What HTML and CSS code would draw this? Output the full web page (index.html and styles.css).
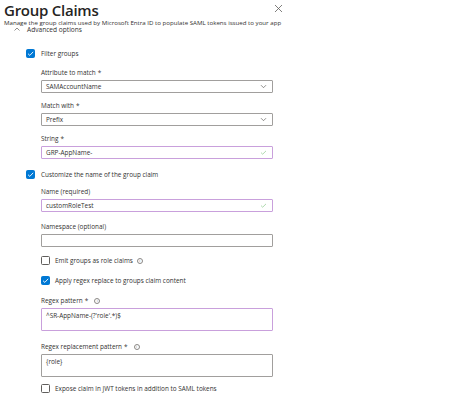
FILE: index.html
```html
<!DOCTYPE html>
<html>
<head>
<meta charset="utf-8">
<link rel="stylesheet" href="styles.css">
</head>
<body>
<div class="panel">
  <header class="head">
    <div class="title-row">
      <h1 class="title">Group Claims</h1>
      <svg class="close" width="9" height="9" viewBox="0 0 9 9"><path d="M1 1L8 8M8 1L1 8" stroke="#605e5c" stroke-width="0.8" fill="none"/></svg>
    </div>
    <p class="subtitle">Manage the group claims used by Microsoft Entra ID to populate SAML tokens issued to your app</p>
  </header>
  <div class="scroll">
    <div class="scroll-inner">
      <div class="adv">
        <svg class="adv-chev" width="6" height="4" viewBox="0 0 6 4"><path d="M0.5 3.5L3 1L5.5 3.5" stroke="#605e5c" stroke-width="0.7" fill="none"/></svg>
        <span>Advanced options</span>
      </div>

      <label class="check lvl1 c-filter">
        <span class="box on"><svg width="9" height="9" viewBox="0 0 9 9"><path d="M2 4.7L3.8 6.4L7.2 2.8" stroke="#fff" stroke-width="0.9" fill="none"/></svg></span>
        <span>Filter groups</span>
      </label>

      <div class="field f-attr">
        <div class="lbl">Attribute to match <span class="req">*</span></div>
        <div class="input"><span>SAMAccountName</span>
          <svg class="dd" width="7" height="5" viewBox="0 0 7 5"><path d="M1 1.2L3.5 3.7L6 1.2" stroke="#605e5c" stroke-width="0.7" fill="none"/></svg></div>
      </div>

      <div class="field f-match">
        <div class="lbl">Match with <span class="req">*</span></div>
        <div class="input"><span>Prefix</span>
          <svg class="dd" width="7" height="5" viewBox="0 0 7 5"><path d="M1 1.2L3.5 3.7L6 1.2" stroke="#605e5c" stroke-width="0.7" fill="none"/></svg></div>
      </div>

      <div class="field f-string">
        <div class="lbl">String <span class="req">*</span></div>
        <div class="input valid"><span>GRP-AppName-</span>
          <svg class="ok" width="7" height="5" viewBox="0 0 7 5"><path d="M1 2.6L2.7 4.2L6 0.9" stroke="#8cc98c" stroke-width="0.7" fill="none"/></svg></div>
      </div>

      <label class="check lvl1 c-custom">
        <span class="box on"><svg width="9" height="9" viewBox="0 0 9 9"><path d="M2 4.7L3.8 6.4L7.2 2.8" stroke="#fff" stroke-width="0.9" fill="none"/></svg></span>
        <span>Customize the name of the group claim</span>
      </label>

      <div class="field f-name">
        <div class="lbl">Name (required)</div>
        <div class="input valid"><span>customRoleTest</span>
          <svg class="ok" width="7" height="5" viewBox="0 0 7 5"><path d="M1 2.6L2.7 4.2L6 0.9" stroke="#8cc98c" stroke-width="0.7" fill="none"/></svg></div>
      </div>

      <div class="field f-ns">
        <div class="lbl">Namespace (optional)</div>
        <div class="input"></div>
      </div>

      <label class="check lvl2 c-emit">
        <span class="box"></span>
        <span>Emit groups as role claims</span>
        <span class="info">i</span>
      </label>

      <label class="check lvl2 c-apply">
        <span class="box on"><svg width="9" height="9" viewBox="0 0 9 9"><path d="M2 4.7L3.8 6.4L7.2 2.8" stroke="#fff" stroke-width="0.9" fill="none"/></svg></span>
        <span>Apply regex replace to groups claim content</span>
      </label>

      <div class="field f-regex">
        <div class="lbl">Regex pattern <span class="req">*</span> <span class="info">i</span></div>
        <div class="input area valid"><span>^SR-AppName-(?'role'.*)$</span></div>
      </div>

      <div class="field f-repl">
        <div class="lbl">Regex replacement pattern <span class="req">*</span> <span class="info">i</span></div>
        <div class="input area"><span>{role}</span></div>
      </div>

      <label class="check lvl2 c-expose">
        <span class="box"></span>
        <span>Expose claim in JWT tokens in addition to SAML tokens</span>
      </label>
    </div>
  </div>
</div>
</body>
</html>
```

FILE: styles.css
```css
html, body {
  margin: 0;
  padding: 0;
  background: #ffffff;
}
body {
  font-family: "Open Sans", "Noto Sans", sans-serif;
  color: #323130;
  width: 474px;
  height: 411px;
  overflow: hidden;
}
.panel {
  width: 290px;
}
.head {
  padding: 0 0 0 4px;
}
.title-row {
  display: flex;
  align-items: flex-start;
  justify-content: space-between;
  width: 279px;
  height: 19px;
}
.title {
  margin: 0;
  padding-top: 1px;
  font-size: 15px;
  line-height: 18px;
  font-weight: 600;
  letter-spacing: -0.25px;
  color: #252423;
}
.close {
  margin-top: 4px;
}
.subtitle {
  margin: 0;
  font-size: 6.15px;
  line-height: 8px;
  color: #323130;
}
.scroll {
  height: 384px;
  overflow: hidden;
}
.scroll-inner {
  margin-top: -3px;
}
.adv {
  display: flex;
  align-items: center;
  gap: 7px;
  padding-left: 14px;
  height: 10px;
  font-size: 6.6px;
}
.check {
  display: flex;
  align-items: center;
  font-size: 6.4px;
  line-height: 9px;
}
.box {
  box-sizing: border-box;
  width: 9px;
  height: 9px;
  border: 1px solid #605e5c;
  border-radius: 1.5px;
  margin-right: 6px;
  display: flex;
}
.box.on {
  background: #0078d4;
  border-color: #0078d4;
}
.box.on svg {
  margin: -1px;
}
.lvl1 { padding-left: 26px; }
.lvl2 { padding-left: 41px; }
.lvl2 .box { margin-right: 5px; }
.field {
  padding-left: 41px;
}
.lbl {
  font-size: 6.4px;
  line-height: 8px;
  height: 8px;
  margin-bottom: 3px;
  display: flex;
  align-items: center;
  gap: 2px;
}
.req { color: #3b3a39; }
.input {
  box-sizing: border-box;
  width: 232px;
  height: 13px;
  border: 1px solid #a19f9d;
  border-radius: 1px;
  display: flex;
  align-items: center;
  justify-content: space-between;
  padding: 0 5px 0 4px;
  font-size: 6.4px;
}
.input.valid {
  border-color: #c9a0dc;
}
.input.area {
  height: 23px;
  align-items: flex-start;
  padding-top: 2px;
}
.info {
  box-sizing: border-box;
  display: inline-flex;
  align-items: center;
  justify-content: center;
  width: 6px;
  height: 6px;
  border: 0.6px solid #8a8886;
  border-radius: 50%;
  font-size: 4px;
  color: #8a8886;
  margin-left: 4px;
}
.c-filter { margin-top: 15px; }
.f-attr { margin-top: 11px; }
.f-match { margin-top: 9px; }
.f-string { margin-top: 9px; }
.c-custom { margin-top: 11px; }
.f-name { margin-top: 9px; }
.f-ns { margin-top: 11px; }
.c-emit { margin-top: 9px; }
.c-apply { margin-top: 11px; }
.f-regex { margin-top: 12px; }
.f-repl { margin-top: 12px; }
.c-expose { margin-top: 7px; }
```
